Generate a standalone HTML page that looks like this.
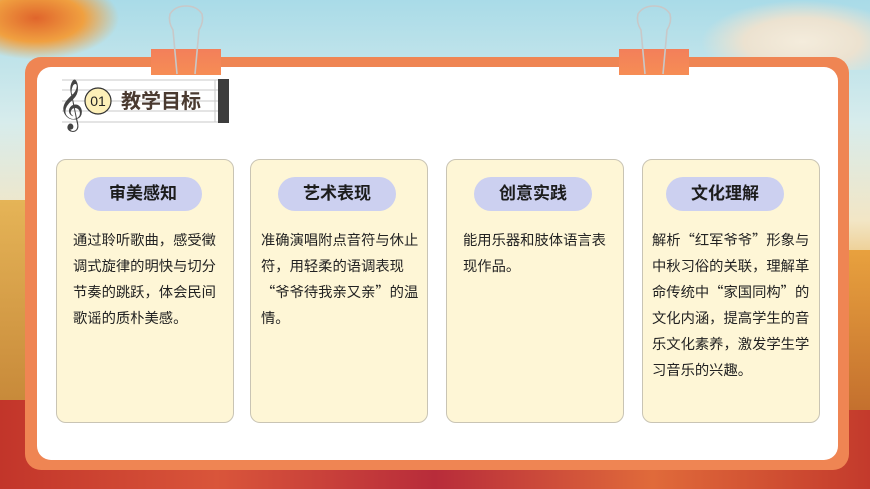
<!DOCTYPE html>
<html><head><meta charset="utf-8"><style>
*{margin:0;padding:0;box-sizing:border-box}
body{width:870px;height:489px;overflow:hidden;position:relative;font-family:"Liberation Sans","Noto Sans CJK SC",sans-serif;
background:linear-gradient(180deg,#a9dbe8 0%,#d7ecec 25%,#f2e6c6 45%,#e9b45a 60%,#d98a3a 75%,#c9402e 90%,#b32a2a 100%)}
.frame{position:absolute;left:25px;top:57px;width:824px;height:413px;background:#ef8553;border-radius:16px}
.inner{position:absolute;left:37px;top:67px;width:801px;height:393px;background:#fff;border-radius:14px}
.tab{position:absolute;top:49px;width:70px;height:26px;background:linear-gradient(#f37f5a,#f68d55);}
.card{position:absolute;top:159px;width:178px;height:264px;background:#fef6d6;border:1px solid #c9c4b4;border-radius:10px}
.pill{position:absolute;top:17px;width:118px;height:34px;border-radius:17px;background:#ccd0f0;color:#1c1c1c;font-weight:bold;font-size:17px;text-align:center;line-height:34px}
.txt{position:absolute;top:67px;font-family:"Noto Sans CJK SC",sans-serif;font-size:14.3px;line-height:26px;color:#222;white-space:nowrap}
</style></head><body>
<div style="position:absolute;left:0;top:0;width:120px;height:60px;background:radial-gradient(ellipse at 30% 30%,#e0652c 0%,#f0a040 40%,transparent 70%)"></div>
<div style="position:absolute;left:700px;top:0;width:170px;height:70px;background:radial-gradient(ellipse at 60% 60%,#f4ecdc 0%,#ece2d0 40%,transparent 70%)"></div>
<div style="position:absolute;left:0;top:380px;width:870px;height:109px;background:linear-gradient(90deg,#c2352a,#d9553a,#b82c3a,#e06a3a,#c33a2c)"></div>
<div style="position:absolute;left:820px;top:250px;width:50px;height:160px;background:linear-gradient(#e8a13e,#c4702e)"></div>
<div style="position:absolute;left:0;top:200px;width:30px;height:200px;background:linear-gradient(#e5b457,#c88a3a)"></div>
<div class="frame"></div>
<div class="inner"></div>
<div class="tab" style="left:151px"></div>
<div class="tab" style="left:619px"></div>
<svg style="position:absolute;left:0;top:0" width="870" height="489">
<g fill="none" stroke="#c8c8c8" stroke-width="1.6">
<path d="M177 74 L173 30 Q168 22 170 14 Q175 6 186 6 Q197 6 202 14 Q204 22 199 30 L195 74"/>
<path d="M645 74 L641 30 Q636 22 638 14 Q643 6 654 6 Q665 6 670 14 Q672 22 667 30 L663 74"/>
</g>
<g stroke="#c9c9c9" stroke-width="1">
<line x1="62" y1="80" x2="218" y2="80"/><line x1="62" y1="90" x2="218" y2="90"/><line x1="62" y1="101" x2="218" y2="101"/><line x1="62" y1="111" x2="218" y2="111"/><line x1="62" y1="122" x2="218" y2="122"/>
<line x1="215" y1="80" x2="215" y2="122"/>
</g>
<rect x="218" y="79" width="11" height="44" fill="#3d3d3d"/>
<text x="58" y="119" font-size="44" fill="#444" font-family="DejaVu Sans,serif">𝄞</text>
<circle cx="98" cy="101" r="13" fill="#fdf0b8" stroke="#333" stroke-width="1.2"/>
<text x="98" y="106" font-size="14" text-anchor="middle" fill="#222" font-family="Liberation Sans,sans-serif">01</text>
<text x="121" y="108" font-size="20" font-weight="bold" fill="#4a3a30" font-family="Liberation Sans,Noto Sans CJK SC,sans-serif">教学目标</text>
</svg>
<div class="card" style="left:56px"><div class="pill" style="left:27px">审美感知</div>
<div class="txt" style="left:16px">通过聆听歌曲，感受徵<br>调式旋律的明快与切分<br>节奏的跳跃，体会民间<br>歌谣的质朴美感。</div></div>
<div class="card" style="left:250px"><div class="pill" style="left:27px">艺术表现</div>
<div class="txt" style="left:10px">准确演唱附点音符与休止<br>符，用轻柔的语调表现<br>“爷爷待我亲又亲”的温<br>情。</div></div>
<div class="card" style="left:446px"><div class="pill" style="left:27px">创意实践</div>
<div class="txt" style="left:16px">能用乐器和肢体语言表<br>现作品。</div></div>
<div class="card" style="left:642px"><div class="pill" style="left:23px">文化理解</div>
<div class="txt" style="left:9px">解析“红军爷爷”形象与<br>中秋习俗的关联，理解革<br>命传统中“家国同构”的<br>文化内涵，提高学生的音<br>乐文化素养，激发学生学<br>习音乐的兴趣。</div></div>
</body></html>
